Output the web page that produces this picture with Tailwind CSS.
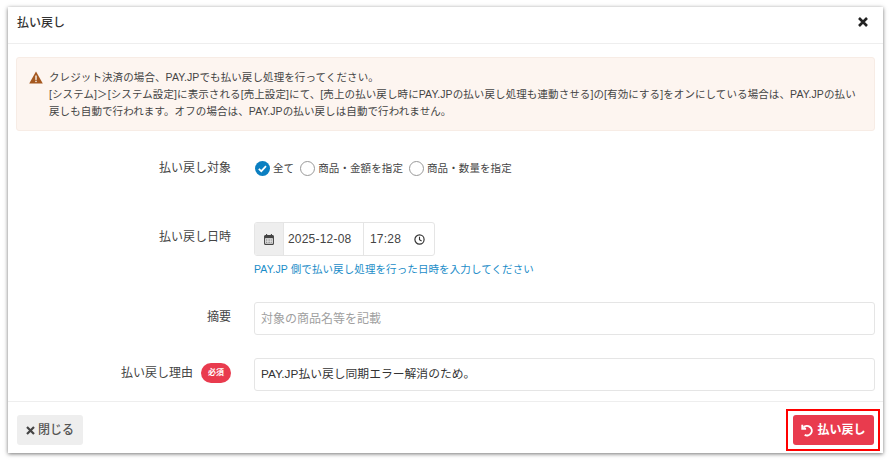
<!DOCTYPE html>
<html lang="ja">
<head>
<meta charset="utf-8">
<script src="https://cdn.jsdelivr.net/npm/@tailwindcss/browser@4"></script>
</head>
<body class="bg-white font-['Liberation_Sans','Noto_Sans_CJK_JP',sans-serif] text-[#333]">
<div class="w-[890px] h-[462px] pt-[7px] pl-[8px] overflow-hidden">
  <div class="relative w-[875px] h-[446px] bg-white flex flex-col shadow-[0_1px_4px_rgba(0,0,0,0.55)]">
    <header class="h-[37px] shrink-0 border-b border-[#eeeeee] flex items-start justify-between pt-[9px] pl-[9px] pr-[14px]">
      <h1 class="text-[12px] font-medium leading-[14px] text-[#333]">払い戻し</h1>
      <svg class="w-[12px] h-[12px]" viewBox="0 0 12 12"><path d="M2 2L10 10M10 2L2 10" stroke="#222" stroke-width="2.6" fill="none"/></svg>
    </header>
    <main class="flex-1 pt-[13px] px-[8px] min-h-0">
      <div class="h-[74px] rounded-[3px] bg-[#fdf5f0] border border-[#f7ece5] flex pl-[12px] pr-[8px] pt-[11px] text-[10.5px] tracking-[0.1px] leading-[17px] text-[#444]">
        <svg class="w-[14px] h-[13px] mt-[2px] mr-[6px] shrink-0" viewBox="0 0 14 13"><path d="M7 0.5L13.8 12.6H0.2Z" fill="#a5581f"/><rect x="6.3" y="4.5" width="1.4" height="4.4" fill="#fdf5f0"/><rect x="6.3" y="9.7" width="1.4" height="1.4" fill="#fdf5f0"/></svg>
        <p class="w-[815px]">クレジット決済の場合、PAY.JPでも払い戻し処理を行ってください。<br>[システム]＞[システム設定]に表示される[売上設定]にて、[売上の払い戻し時にPAY.JPの払い戻し処理も連動させる]の[有効にする]をオンにしている場合は、PAY.JPの払い戻しも自動で行われます。オフの場合は、PAY.JPの払い戻しは自動で行われません。</p>
      </div>

      <div class="grid grid-cols-[215px_1fr] gap-x-[23px] mt-[25px]">
        <label class="text-right text-[12px] leading-[24px] text-[#444]">払い戻し対象</label>
        <div class="h-[66px] flex items-start gap-[6px] pt-[3px] pl-[1px] text-[10.5px] tracking-[0.1px] leading-[18px] text-[#444]">
          <span class="flex items-center gap-[3px]">
            <svg class="w-[15px] h-[15px]" viewBox="0 0 15 15"><circle cx="7.5" cy="7.5" r="7.5" fill="#0b7fc1"/><path d="M3.8 7.8L6.3 10.2L11 5.2" stroke="#fff" stroke-width="1.7" fill="none"/></svg>全て
          </span>
          <span class="flex items-center gap-[3px]"><span class="w-[15px] h-[15px] rounded-full border border-[#999] bg-white"></span>商品・金額を指定</span>
          <span class="flex items-center gap-[3px]"><span class="w-[15px] h-[15px] rounded-full border border-[#999] bg-white"></span>商品・数量を指定</span>
        </div>

        <label class="text-right text-[12px] leading-[31px] text-[#444]">払い戻し日時</label>
        <div class="h-[80px]">
          <div class="w-[181px] h-[34px] flex rounded-[3px] border border-[#e5e5e5] text-[12px] text-[#444] overflow-hidden">
            <span class="w-[29px] bg-[#eeeeee] border-r border-[#e5e5e5] flex items-center justify-center">
              <svg class="w-[10px] h-[11px]" viewBox="0 0 10 11"><rect x="0.6" y="1.6" width="8.8" height="8.8" rx="1" fill="none" stroke="#444" stroke-width="1.1"/><rect x="0.6" y="1.6" width="8.8" height="2.6" fill="#444"/><path d="M2.6 0V2M7.4 0V2" stroke="#444" stroke-width="1.1"/><path d="M2 6H8M2 8.2H8" stroke="#444" stroke-width="0.8" stroke-dasharray="1 .6"/></svg>
            </span>
            <span class="w-[80px] border-r border-[#e5e5e5] flex items-center pl-[4px] tracking-[0.2px]">2025-12-08</span>
            <span class="flex-1 flex items-center justify-between pl-[6px] pr-[9px] tracking-[0.2px]">17:28
              <svg class="w-[11px] h-[11px]" viewBox="0 0 11 11"><circle cx="5.5" cy="5.5" r="4.6" fill="none" stroke="#333" stroke-width="1.2"/><path d="M5.5 2.8V5.7L7.6 6.9" fill="none" stroke="#333" stroke-width="1.1"/></svg>
            </span>
          </div>
          <p class="mt-[5px] text-[10.5px] tracking-[0.1px] leading-[16px] text-[#1a8cc8]">PAY.JP 側で払い戻し処理を行った日時を入力してください</p>
        </div>

        <label class="text-right text-[12px] leading-[30px] text-[#444]">摘要</label>
        <div class="h-[56px]">
          <div class="w-[621px] h-[33px] rounded-[3px] border border-[#e5e5e5] flex items-center pl-[6px] text-[12px] text-[#a0a0a0]">対象の商品名等を記載</div>
        </div>

        <label class="flex justify-end items-center gap-[8px] h-[30px] text-[12px] text-[#444]">払い戻し理由
          <span class="w-[30px] h-[20px] rounded-full bg-[#e93b4e] text-white text-[8px] font-bold flex items-center justify-center">必須</span>
        </label>
        <div class="w-[621px] h-[33px] rounded-[3px] border border-[#e5e5e5] flex items-center pl-[6px] text-[11.8px] text-[#333]">PAY.JP払い戻し同期エラー解消のため。</div>
      </div>
    </main>
    <footer class="h-[52px] shrink-0 border-t border-[#eeeeee] flex items-start justify-between pt-[13px] pl-[9px] pr-[9px]">
      <button class="w-[66px] h-[30px] rounded-[3px] bg-[#eeeeee] flex items-center justify-center gap-[3px] text-[12px] text-[#555] font-medium">
        <svg class="w-[9px] h-[9px]" viewBox="0 0 9 9"><path d="M1 1L8 8M8 1L1 8" stroke="#444" stroke-width="2.2" fill="none"/></svg>閉じる
      </button>
      <div class="relative">
        <button class="w-[81px] h-[30px] rounded-[3px] bg-[#e93b4e] flex items-center justify-center gap-[3px] text-[12px] font-bold text-white">
          <svg class="w-[13px] h-[13px]" viewBox="0 0 12 12"><path d="M2.2 3.3A4.4 4.4 0 1 1 3.4 10" fill="none" stroke="#fff" stroke-width="1.8"/><path d="M1.2 0.8V4.3H4.7" fill="none" stroke="#fff" stroke-width="1.8"/></svg>払い戻し
        </button>
        <div class="absolute -left-[7px] -top-[6px] w-[94px] h-[42px] border-[2px] border-[#ff0000]"></div>
      </div>
    </footer>
  </div>
</div>
</body>
</html>
